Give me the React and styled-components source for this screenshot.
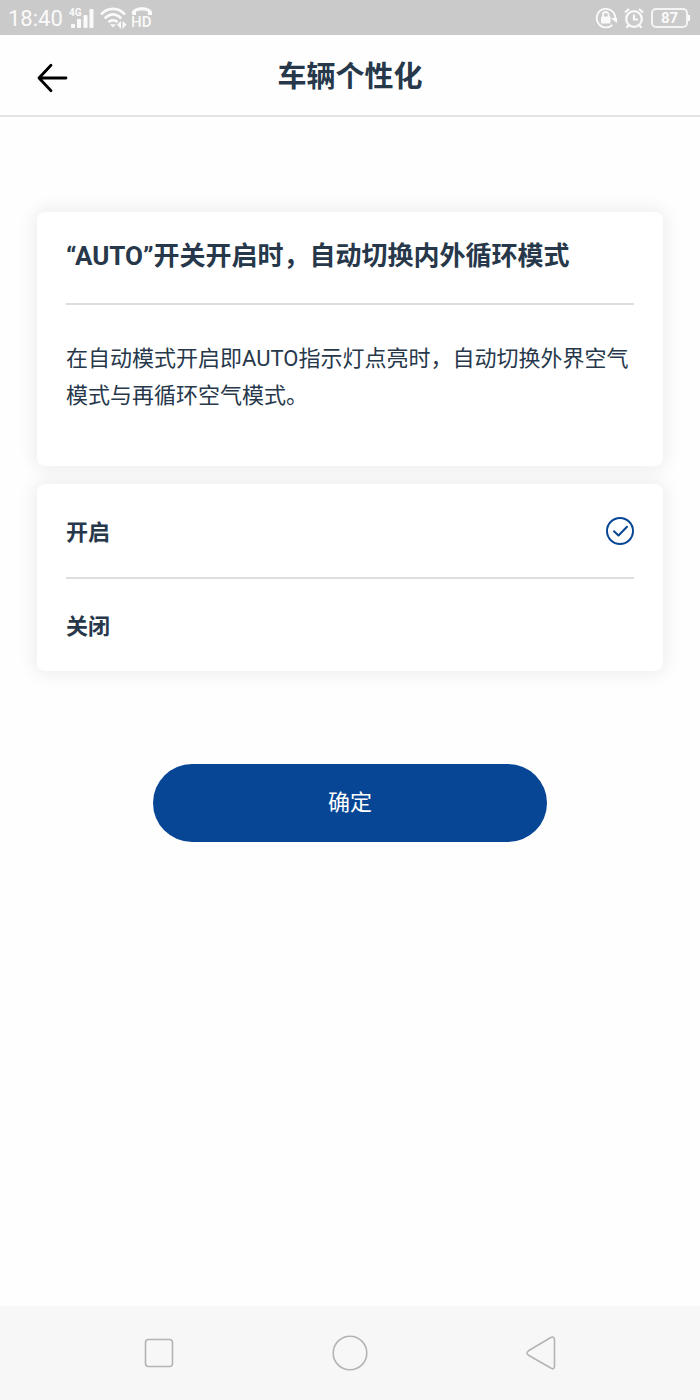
import React, { useState } from 'react';
import styled, { createGlobalStyle } from 'styled-components';

const Colors = {
  ink: '#27384b',
  blue: '#064695',
  line: '#dedede',
  status: '#cacaca',
  nav: '#f7f7f7',
  navIcon: '#b4b4b4',
};

const GlobalStyle = createGlobalStyle`
  * {
    box-sizing: border-box;
  }
  body {
    margin: 0;
    background: #fefefe;
    color: ${Colors.ink};
    font-family: Roboto, 'Noto Sans CJK SC', sans-serif;
  }
  h1, h2, p {
    margin: 0;
  }
  button {
    border: 0;
    padding: 0;
    background: none;
    font: inherit;
    cursor: pointer;
  }
`;

const Page = styled.div`
  display: flex;
  flex-direction: column;
  min-height: 100vh;
`;

const StatusBar = styled.div`
  display: flex;
  align-items: center;
  justify-content: space-between;
  height: 35px;
  padding: 0 10px 0 8px;
  background: ${Colors.status};
  color: #fafafa;
`;

const StatusGroup = styled.div`
  display: flex;
  align-items: center;
  gap: ${({ gap }) => gap}px;
`;

const Time = styled.span`
  font-size: 22px;
  line-height: 34px;
  padding-top: 2px;
`;

const Battery = styled.div`
  display: flex;
  align-items: center;

  &::after {
    content: '';
    width: 2px;
    height: 6px;
    background: #fafafa;
  }
`;

const BatteryLevel = styled.span`
  width: 37px;
  height: 20px;
  border: 2px solid #f4f4f4;
  border-radius: 5px;
  font-size: 15px;
  font-weight: 700;
  line-height: 17px;
  text-align: center;
`;

const Header = styled.header`
  display: grid;
  grid-template-columns: 104px 1fr 104px;
  align-items: center;
  height: 82px;
  border-bottom: 2px solid #e4e4e4;
`;

const BackButton = styled.button`
  display: flex;
  justify-content: center;
  padding: 12px 0 7px;
`;

const Title = styled.h1`
  padding-top: 3px;
  font-size: 29px;
  font-weight: 700;
  line-height: 44px;
  text-align: center;
`;

const Content = styled.main`
  display: flex;
  flex: 1;
  flex-direction: column;
  gap: 18px;
  padding: 95px 37px 40px;
`;

const Card = styled.section`
  padding: 0 29px;
  border-radius: 8px;
  background: #fff;
  box-shadow: 0 0 18px 3px rgba(0, 0, 0, 0.07);
`;

const CardTitle = styled.h2`
  padding: 24px 0 27px;
  border-bottom: 2px solid ${Colors.line};
  font-size: 26px;
  font-weight: 700;
  line-height: 40px;
`;

const Description = styled.p`
  padding: 35px 0 52px;
  font-size: 22px;
  line-height: 37px;
`;

const Option = styled.label`
  display: flex;
  align-items: center;
  justify-content: space-between;
  height: 93px;
  cursor: pointer;

  & + & {
    border-top: 2px solid ${Colors.line};
    height: 94px;
  }
`;

const OptionName = styled.span`
  padding-bottom: 2px;
  font-size: 22px;
  font-weight: 700;
`;

const RadioBox = styled.span`
  display: grid;
  width: 28px;
  height: 28px;

  & > * {
    grid-area: 1 / 1;
  }
`;

const Radio = styled.input`
  appearance: none;
  width: 28px;
  height: 28px;
  margin: 0;
  border-radius: 50%;
  cursor: pointer;

  &:checked {
    border: 2px solid ${Colors.blue};
  }
`;

const Check = styled.svg`
  pointer-events: none;
`;

const ConfirmButton = styled.button`
  && {
    align-self: center;
    width: 63%;
    height: 78px;
    margin-top: 75px;
    padding-bottom: 6px;
    border-radius: 39px;
    background: ${Colors.blue};
    color: #fff;
    font-size: 22px;
  }
`;

const NavBar = styled.nav`
  display: flex;
  align-items: center;
  justify-content: space-between;
  height: 94px;
  padding: 0 19%;
  background: ${Colors.nav};
`;

const NavButton = styled.button`
  display: flex;
  align-items: center;
  justify-content: center;
  width: 52px;
  height: 52px;
`;

const options = [
  { value: 'on', label: '开启' },
  { value: 'off', label: '关闭' },
];

function SignalIcon() {
  return (
    <svg width="27" height="22" viewBox="-1 0 27 22" fill="currentColor">
      <text x="0" y="9" fontSize="10" fontWeight="700" fontFamily="Roboto">4G</text>
      <rect x="2" y="17" width="4" height="4" rx="1" />
      <rect x="8" y="12" width="4" height="9" rx="1" />
      <rect x="14.5" y="8" width="4" height="13" rx="1" />
      <rect x="20.5" y="2" width="4" height="19" rx="1" />
    </svg>
  );
}

function WifiIcon() {
  return (
    <svg width="27" height="24" viewBox="0 0 27 24" fill="none" stroke="currentColor" strokeWidth="2.6">
      <path d="M1 8.500C7.500 1 18.500 1 25 8.500" />
      <path d="M4.800 12.500C10 7 16 7 21.200 12.500" />
      <path d="M8.500 16.200C11 13.500 15 13.500 17.500 16.200" />
      <path d="M10 18.200h6L13 21.500z" fill="currentColor" stroke="none" />
      <path d="M21 15v8l-4-4.500zM22.500 15v8l4-4.500z" fill="currentColor" stroke="none" />
    </svg>
  );
}

function HdCallIcon() {
  return (
    <svg width="24" height="28" viewBox="0 0 24 28" fill="currentColor">
      <path d="M0 11V8C1.500 1.500 18.500 1.500 20 8v3h-4V7.500c-2.500-1.500-9.500-1.500-12 0V11z" />
      <text x="-1" y="23" fontSize="15" fontWeight="500" fontFamily="Roboto">HD</text>
    </svg>
  );
}

function RotationLockIcon() {
  return (
    <svg width="22" height="22" viewBox="0 0 22 22" fill="none" stroke="currentColor" strokeWidth="1.800">
      <path d="M17.500 17.800A9.300 9.300 0 1 1 20.300 11" />
      <path d="M15.500 11h6.500v5z" fill="currentColor" stroke="none" />
      <rect x="6" y="9.500" width="9.500" height="7" rx="1" fill="currentColor" stroke="none" />
      <path d="M8 10V7.800a2.800 2.800 0 0 1 5.600 0V10" />
    </svg>
  );
}

function AlarmIcon() {
  return (
    <svg width="20" height="22" viewBox="0 0 20 22" fill="none" stroke="currentColor" strokeWidth="2.200">
      <circle cx="10" cy="12" r="7.800" />
      <path d="M10 7.500V12.500h4M1 5.500l4-3.500M19 5.500L15 2M4.500 18.500l-2 2.200M15.500 18.500l2 2.200" />
    </svg>
  );
}

function App() {
  const [selected, setSelected] = useState('on');

  return (
    <>
      <GlobalStyle />
      <Page>
        <StatusBar>
          <StatusGroup gap={5}>
            <Time>18:40</Time>
            <SignalIcon />
            <WifiIcon />
            <HdCallIcon />
          </StatusGroup>
          <StatusGroup gap={7}>
            <RotationLockIcon />
            <AlarmIcon />
            <Battery>
              <BatteryLevel>87</BatteryLevel>
            </Battery>
          </StatusGroup>
        </StatusBar>

        <Header>
          <BackButton type="button" aria-label="返回">
            <svg width="32" height="30" viewBox="0 0 32 30" fill="none" stroke="#000" strokeWidth="2.800" strokeLinecap="round" strokeLinejoin="round">
              <path d="M30 15H3M15 2.200L3 15l12 12.800" />
            </svg>
          </BackButton>
          <Title>车辆个性化</Title>
        </Header>

        <Content>
          <Card>
            <CardTitle>“AUTO”开关开启时，自动切换内外循环模式</CardTitle>
            <Description>
              在自动模式开启即AUTO指示灯点亮时，自动切换外界空气模式与再循环空气模式。
            </Description>
          </Card>

          <Card>
            {options.map(({ value, label }) => (
              <Option key={value}>
                <OptionName>{label}</OptionName>
                <RadioBox>
                  <Radio
                    type="radio"
                    name="circulation"
                    value={value}
                    checked={selected === value}
                    onChange={() => setSelected(value)}
                  />
                  {selected === value && (
                    <Check width="28" height="28" viewBox="0 0 28 28" fill="none" stroke={Colors.blue} strokeWidth="2" strokeLinecap="round" strokeLinejoin="round">
                      <path d="M8 14.200l4.500 4.300L21 9.800" />
                    </Check>
                  )}
                </RadioBox>
              </Option>
            ))}
          </Card>

          <ConfirmButton type="button">确定</ConfirmButton>
        </Content>

        <NavBar>
          <NavButton type="button" aria-label="最近任务">
            <svg width="30" height="30" viewBox="0 0 30 30" fill="none" stroke={Colors.navIcon} strokeWidth="1.600">
              <rect x="1.500" y="1.500" width="27" height="27" rx="3" />
            </svg>
          </NavButton>
          <NavButton type="button" aria-label="主屏幕">
            <svg width="36" height="36" viewBox="0 0 36 36" fill="none" stroke={Colors.navIcon} strokeWidth="1.600">
              <circle cx="18" cy="18" r="16.800" />
            </svg>
          </NavButton>
          <NavButton type="button" aria-label="后退">
            <svg width="30" height="34" viewBox="0 0 30 34" fill="none" stroke={Colors.navIcon} strokeWidth="1.600" strokeLinejoin="round">
              <path d="M2.500 14.800L24.800 1.500Q28.500 0 28.500 4V30Q28.500 34 24.800 32L2.500 19.200Q-.5 17 2.500 14.800z" />
            </svg>
          </NavButton>
        </NavBar>
      </Page>
    </>
  );
}

export default App;
